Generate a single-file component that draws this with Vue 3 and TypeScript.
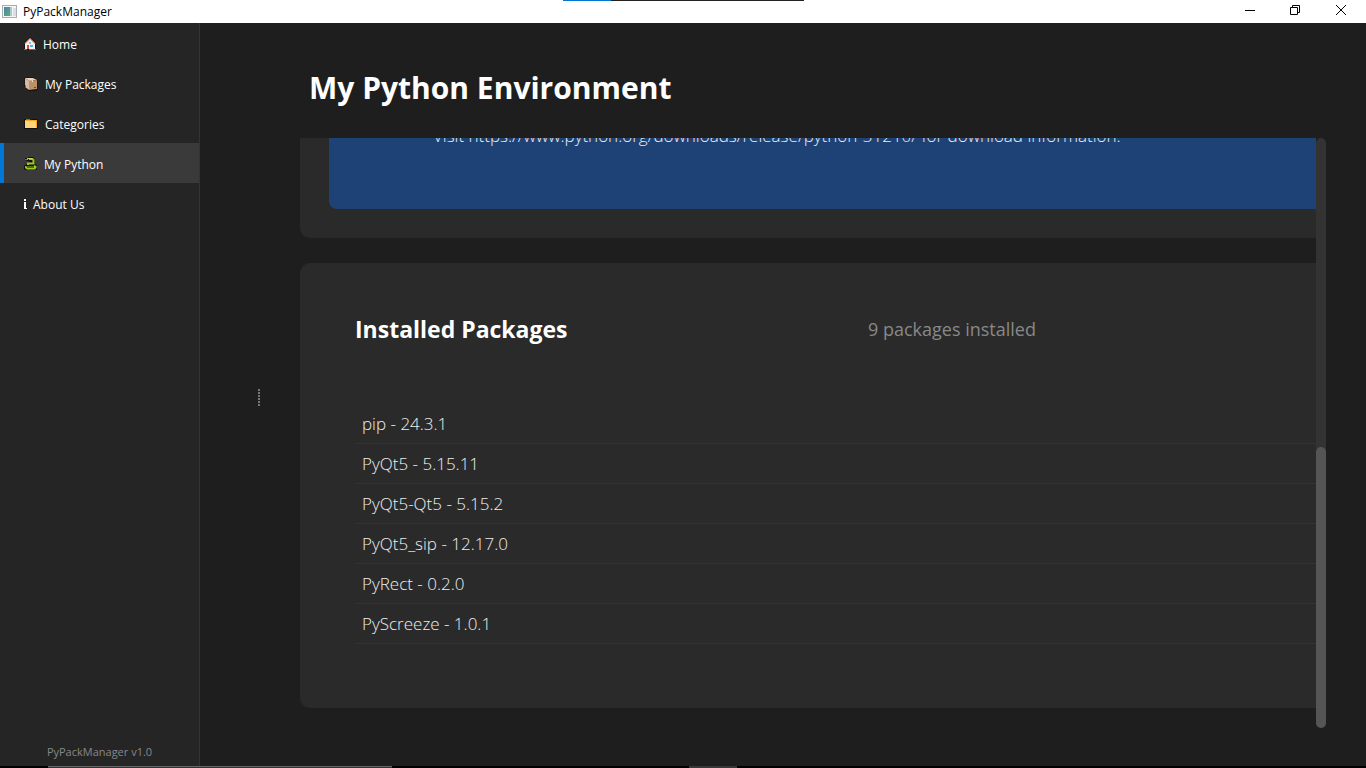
<script setup lang="ts">
import { ref } from 'vue'

interface NavItem {
  id: string
  label: string
}

const navItems: NavItem[] = [
  { id: 'home', label: 'Home' },
  { id: 'packages', label: 'My Packages' },
  { id: 'categories', label: 'Categories' },
  { id: 'python', label: 'My Python' },
  { id: 'about', label: 'About Us' },
]

const active = ref<string>('python')

const packages: string[] = [
  'pip - 24.3.1',
  'PyQt5 - 5.15.11',
  'PyQt5-Qt5 - 5.15.2',
  'PyQt5_sip - 12.17.0',
  'PyRect - 0.2.0',
  'PyScreeze - 1.0.1',
]
</script>

<template>
  <div class="window">
    <header class="titlebar">
      <svg class="app-icon" width="16" height="14" viewBox="0 0 16 14" aria-hidden="true">
        <defs>
          <linearGradient id="pane" x1="0" y1="0" x2="1" y2="1">
            <stop offset="0" stop-color="#4a80b4" />
            <stop offset="1" stop-color="#5fae6c" />
          </linearGradient>
        </defs>
        <rect x="0.5" y="0.5" width="14" height="12" fill="#f4f5f6" stroke="#a9adb1" />
        <rect x="2" y="2" width="6" height="9" fill="url(#pane)" />
        <rect x="8" y="2" width="2" height="9" fill="#a9c9cf" />
        <rect x="11" y="3" width="3" height="8" fill="#dcdfe2" />
      </svg>
      <span class="app-name">PyPackManager</span>
      <div class="caption-buttons">
        <button type="button" aria-label="Minimize">
          <svg width="11" height="11" viewBox="0 0 11 11"><path d="M1 5.5H11" stroke="#000" fill="none" /></svg>
        </button>
        <button type="button" aria-label="Restore">
          <svg width="11" height="11" viewBox="0 0 11 11">
            <path d="M0.5 2.5H7.5V9.5H0.5ZM2.5 2.5V0.5H9.5V7.5H7.5" stroke="#000" fill="none" />
          </svg>
        </button>
        <button type="button" aria-label="Close">
          <svg width="11" height="11" viewBox="0 0 11 11"><path d="M0 0L10 10M10 0L0 10" stroke="#000" fill="none" /></svg>
        </button>
      </div>
      <div class="top-strip"><i class="strip-accent"></i></div>
    </header>

    <div class="body">
      <aside class="sidebar">
        <nav>
          <button
            v-for="item in navItems"
            :key="item.id"
            type="button"
            class="nav-item"
            :class="{ active: active === item.id }"
            @click="active = item.id"
          >
            <svg v-if="item.id === 'home'" width="13" height="14" viewBox="0 0 13 14" aria-hidden="true">
              <path d="M6 0L12 6V13H0V6Z" fill="#111" />
              <path d="M6 1L11 6V12H1V6Z" fill="#f4f0f0" />
              <path d="M0.5 7L6 1.5L11.5 7" fill="none" stroke="#d9452c" />
              <rect x="5" y="5" width="2" height="2" fill="#7cc8ec" />
              <rect x="3" y="8" width="2" height="4" fill="#e24a26" />
              <rect x="6" y="8" width="3" height="2" fill="#49b8e8" />
              <path d="M0 12H3V13H0ZM5 12H12V13H5Z" fill="#1c9a38" />
            </svg>
            <svg v-else-if="item.id === 'packages'" width="15" height="14" viewBox="0 0 15 14" aria-hidden="true">
              <path d="M1 1L10 1L13 3V13L5 13.5L1 10Z" fill="#111" stroke="#111" />
              <path d="M1 1L9 1L13 3L5 4Z" fill="#e8ccb2" />
              <path d="M1 1L5 4V13L1 10Z" fill="#d9b9a4" />
              <path d="M5 4L13 3V12L5 13Z" fill="#bd9168" />
              <path d="M4 1H6L9 3.4V5H8V3.7Z" fill="#f0dcc4" />
              <rect x="1" y="8" width="1" height="2" fill="#d94358" />
              <rect x="10" y="10" width="2" height="1" fill="#6b4528" />
            </svg>
            <svg v-else-if="item.id === 'categories'" width="15" height="12" viewBox="0 0 15 12" aria-hidden="true">
              <path d="M0 1H6L7 2H8V1H14V11H0Z" fill="#111" />
              <path d="M1 2H13V10H1Z" fill="#f7a820" />
              <rect x="2" y="1" width="4" height="1" fill="#d9482b" />
              <path d="M1 3H11L12 4V10H1Z" fill="#ffd47c" />
            </svg>
            <svg v-else-if="item.id === 'python'" width="14" height="14" viewBox="0 0 14 14" aria-hidden="true">
              <path d="M1 1H4V0H9L11 2V7L13 8V12L12 13H1L0 12V9L3 7V6H6V5L1 3Z" fill="#111" />
              <path d="M3 2H8.5L9.5 3V6.5H4V8" fill="none" stroke="#9bc922" stroke-width="2" />
              <path d="M1 9V11L3 12.5H11L12.5 11V9L10 8V9.5H3Z" fill="#9bc922" />
              <path d="M3 10.5H10" stroke="#4d7010" fill="none" />
              <path d="M4 1.5H8" stroke="#c3dc5a" fill="none" />
              <rect x="1" y="2" width="2" height="1" fill="#e23a2a" />
              <rect x="4" y="2" width="1" height="1" fill="#111" />
            </svg>
            <svg v-else width="3" height="12" viewBox="0 0 3 12" aria-hidden="true">
              <rect x="0" y="1" width="2" height="2" fill="#fff" />
              <path d="M0 4H2V10H3V11H0Z" fill="#fff" />
            </svg>
            <span>{{ item.label }}</span>
          </button>
        </nav>
        <p class="version">PyPackManager v1.0</p>
      </aside>

      <div class="splitter" role="separator" aria-orientation="vertical">
        <svg width="2" height="18" viewBox="0 0 2 18" aria-hidden="true">
          <path d="M1 0V18" stroke="#777" stroke-width="2" stroke-dasharray="2 1" />
        </svg>
      </div>

      <main class="page">
        <h1>My Python Environment</h1>
        <div class="scroll-area">
          <div class="viewport">
            <section class="card card-update">
              <div class="banner">
                <p>Visit https://www.python.org/downloads/release/python-31210/ for download information.</p>
              </div>
            </section>
            <section class="card card-packages">
              <div class="card-head">
                <h2>Installed Packages</h2>
                <span class="count">9 packages installed</span>
              </div>
              <ul>
                <li v-for="pkg in packages" :key="pkg">{{ pkg }}</li>
              </ul>
            </section>
          </div>
          <div class="scrollbar"><div class="thumb"></div></div>
        </div>
      </main>
    </div>

    <footer class="bottom-strip"><i class="strip-search"></i><i class="strip-task"></i></footer>
  </div>
</template>

<style>
body {
  margin: 0;
  background: #1e1e1e;
}
</style>

<style scoped>
.window {
  height: 100vh;
  display: flex;
  flex-direction: column;
  overflow: hidden;
  background: #1e1e1e;
  color: #fff;
  font-family: "Segoe UI", "Open Sans", "Noto Sans", sans-serif;
}
h1, h2, p, ul {
  margin: 0;
  padding: 0;
}
button {
  border: 0;
  padding: 0;
  background: none;
  font: inherit;
  color: inherit;
}
.titlebar {
  position: relative;
  flex: none;
  height: 23px;
  display: flex;
  align-items: center;
  background: #fff;
  color: #000;
}
.app-icon {
  margin: 0 5px 0 2px;
}
.app-name {
  font-size: 12px;
}
.caption-buttons {
  display: flex;
  margin-left: auto;
  height: 100%;
}
.caption-buttons button {
  width: 46px;
  display: flex;
  align-items: center;
  justify-content: center;
  padding-right: 4px;
  padding-bottom: 3px;
}
.top-strip {
  position: absolute;
  top: 0;
  left: 563px;
  width: 241px;
  height: 1px;
  background: #222;
}
.strip-accent {
  display: block;
  width: 48px;
  height: 1px;
  background: #0078d7;
}
.body {
  flex: 1;
  min-height: 0;
  display: flex;
}
.sidebar {
  flex: none;
  box-sizing: border-box;
  width: 200px;
  display: flex;
  flex-direction: column;
  justify-content: space-between;
  background: #252525;
  border-right: 1px solid #333;
}
.nav-item {
  box-sizing: border-box;
  width: 100%;
  height: 40px;
  display: flex;
  align-items: center;
  gap: 6px;
  padding-top: 2px;
  padding-left: 20px;
  border-left: 4px solid transparent;
  font-size: 12px;
  text-align: left;
}
.nav-item.active {
  background: #3a3a3a;
  border-left-color: #0078d7;
}
.version {
  padding-bottom: 6px;
  text-align: center;
  font-size: 11px;
  line-height: 16px;
  color: #888;
}
.splitter {
  flex: none;
  width: 100px;
  display: flex;
  align-items: center;
  justify-content: center;
  padding-top: 6px;
  padding-left: 18px;
  box-sizing: border-box;
}
.page {
  flex: 1;
  min-width: 0;
  display: flex;
  flex-direction: column;
  padding: 41px 40px 38px 0;
}
h1 {
  padding-left: 9px;
  margin-bottom: 26px;
  font-size: 30px;
  line-height: 48px;
  font-weight: 700;
}
.scroll-area {
  flex: 1;
  min-height: 0;
  display: flex;
}
.viewport {
  flex: 1;
  min-width: 0;
  display: flex;
  flex-direction: column;
  justify-content: flex-end;
  gap: 25px;
  padding-bottom: 20px;
  overflow: hidden;
}
.card {
  flex: none;
  width: calc(100% + 60px);
  box-sizing: border-box;
  background: #2a2a2a;
  border-radius: 10px;
}
.card-update {
  padding: 29px;
}
.banner {
  padding: 61px 104px;
  background: #1e4276;
  border-radius: 8px;
}
.banner p {
  font-size: 17px;
  font-weight: 300;
  line-height: 24px;
  color: #eee;
  white-space: nowrap;
}
.card-packages {
  padding: 46px 55px 64px;
}
.card-head {
  display: grid;
  grid-template-columns: 1fr 1fr;
  align-items: center;
  height: 40px;
  margin-bottom: 55px;
}
h2 {
  font-size: 23px;
  line-height: 32px;
  font-weight: 700;
}
.count {
  padding-left: 30px;
  font-size: 18px;
  line-height: 24px;
  color: #888;
}
ul {
  list-style: none;
}
li {
  box-sizing: border-box;
  height: 40px;
  padding-left: 7px;
  border-bottom: 1px solid #333;
  font-size: 17px;
  font-weight: 300;
  line-height: 40px;
  color: #eee;
}
.scrollbar {
  flex: none;
  width: 10px;
  display: flex;
  flex-direction: column;
  justify-content: flex-end;
  background: #333;
  border-radius: 5px;
}
.thumb {
  height: 281px;
  background: #555;
  border-radius: 5px;
}
.bottom-strip {
  flex: none;
  height: 2px;
  display: flex;
  background: #000;
}
.strip-search {
  box-sizing: border-box;
  width: 344px;
  margin-left: 48px;
  background: #333;
  border-top: 1px solid #666;
}
.strip-task {
  width: 48px;
  margin-left: 297px;
  background: #383838;
}
</style>
